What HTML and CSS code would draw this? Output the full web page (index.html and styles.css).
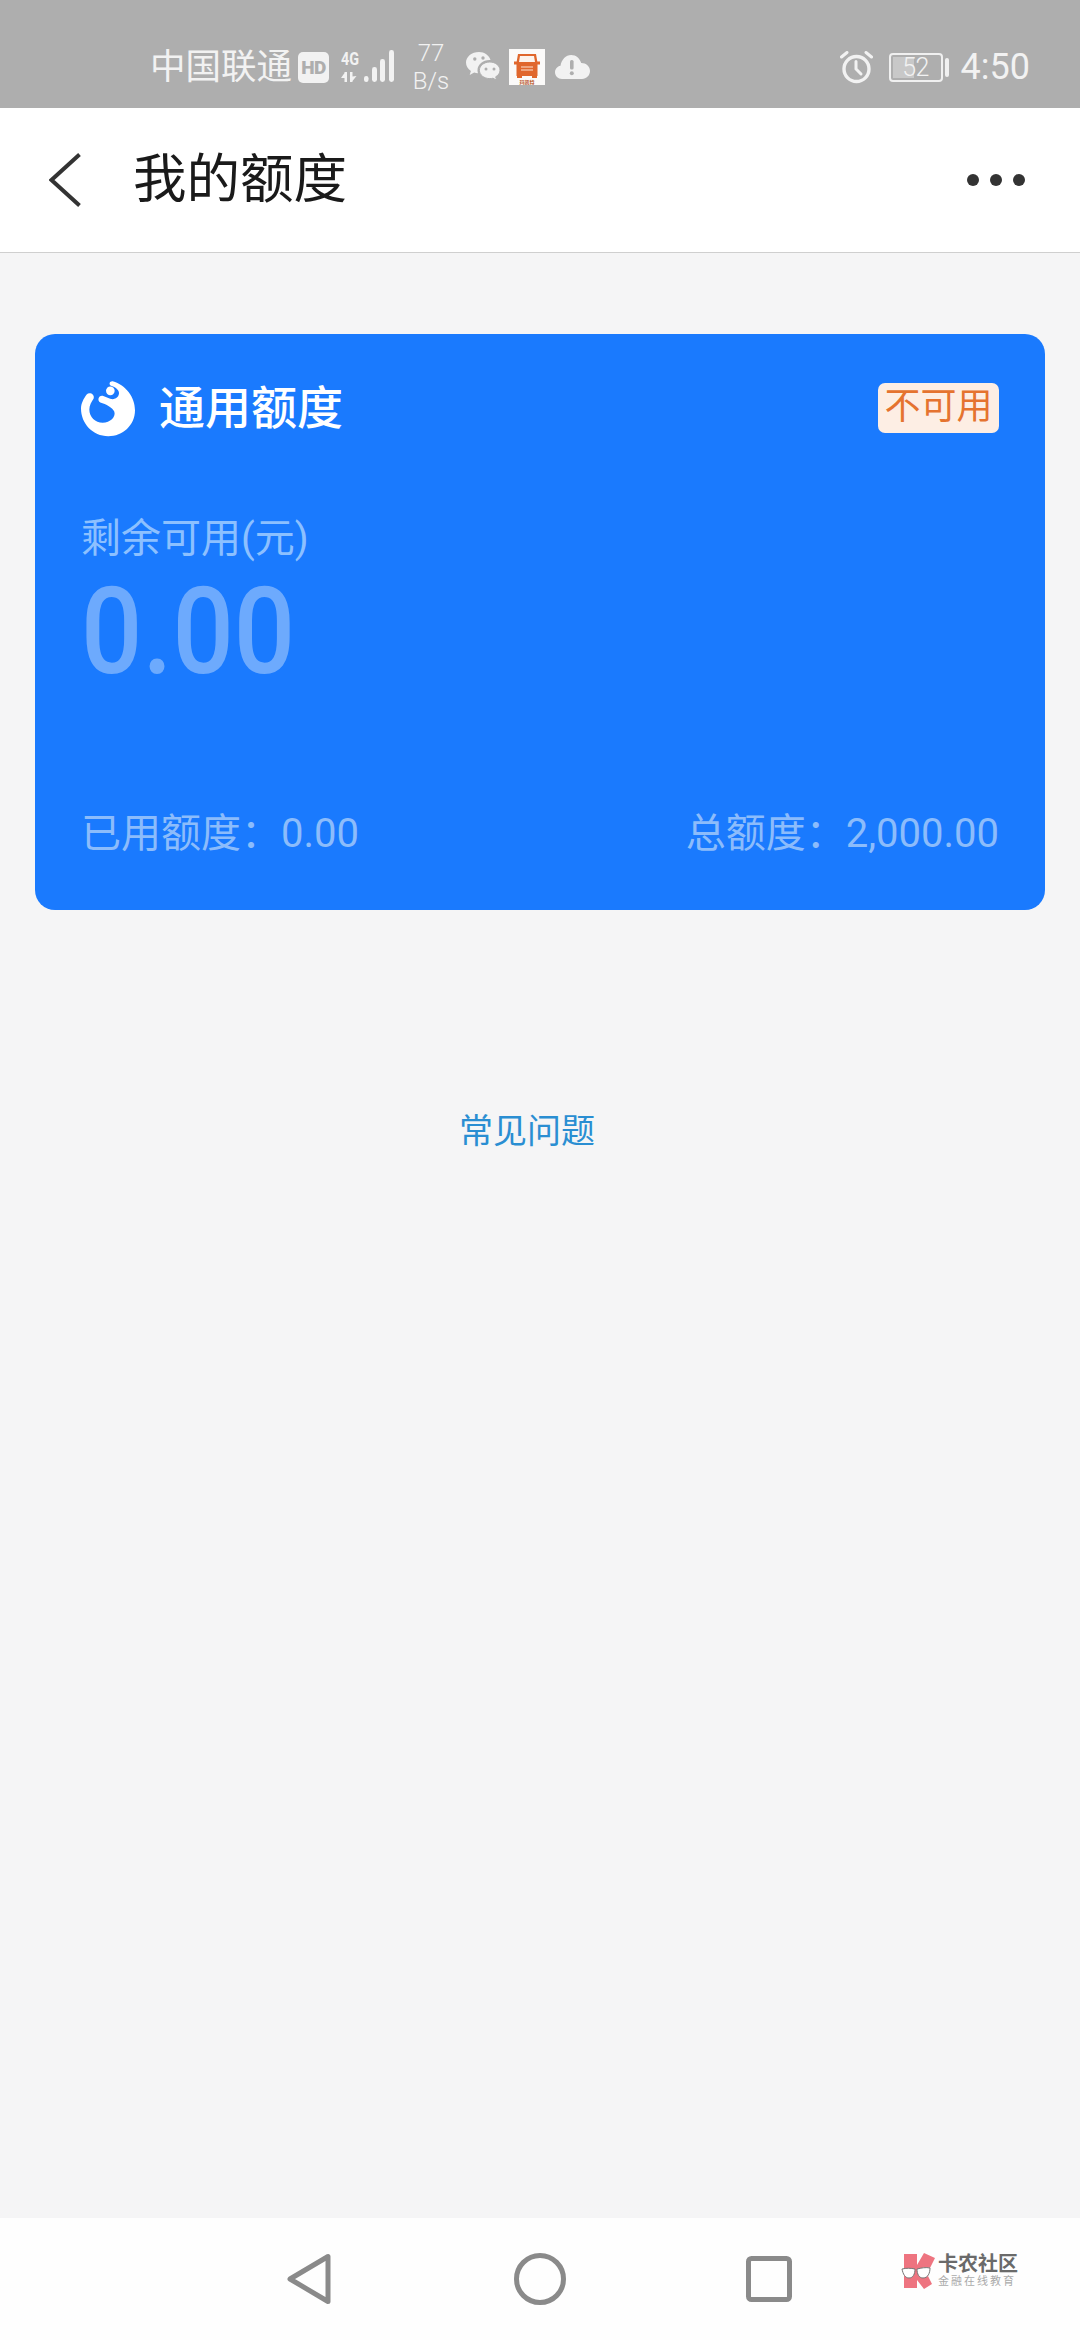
FILE: index.html
```html
<!DOCTYPE html>
<html lang="zh-CN">
<head>
<meta charset="utf-8">
<title>我的额度</title>
<link rel="stylesheet" href="styles.css">
</head>
<body>
<div class="app">
  <div class="status">
    <span class="carrier">中国联通</span>
    <span class="hd">HD</span>
    <svg class="signal" viewBox="0 0 54 34" width="54" height="34">
      <text x="0" y="15" class="net" textLength="18" lengthAdjust="spacingAndGlyphs">4G</text>
      <g fill="#f2f2f2">
        <path d="M3.500 22h2.500v10H3.500ZM3.500 23 0 28h3.500Z"/>
        <path d="M9 22h2.500v4.500l4-.5-4 5V32H9Z"/>
        <rect x="23" y="26" width="4.500" height="6" rx="2.200"/>
        <rect x="31" y="17" width="5" height="15" rx="2.400"/>
        <rect x="39" y="9" width="5" height="23" rx="2.400"/>
        <rect x="48" y="0" width="5" height="32" rx="2.400"/>
      </g>
    </svg>
    <div class="speed"><span>77</span><span>B/s</span></div>
    <svg class="wechat" viewBox="0 0 34 30" width="34" height="30">
      <path fill="#f2f2f2" d="M13 0C5.800 0 0 4.700 0 10.600c0 3.400 1.900 6.300 4.900 8.300L3.700 23l4.500-2.400c1.200.3 2.500.5 3.800.6-.3-1-.5-2-.5-3 0-5.700 5.400-10.200 12-10.200h1C23.100 3.300 18.500 0 13 0Z"/>
      <path fill="#f2f2f2" stroke="#aeaeae" stroke-width="1" d="M23.800 10C18 10 13.400 13.700 13.400 18.300c0 4.600 4.600 8.300 10.400 8.300 1.100 0 2.200-.1 3.200-.4l3.600 2-.9-3.400c2.700-1.500 4.300-3.900 4.300-6.500C34 13.700 29.500 10 23.800 10Z"/>
      <circle cx="8.800" cy="7" r="1.700" fill="#aeaeae"/><circle cx="17" cy="6" r="1.700" fill="#aeaeae"/>
      <circle cx="20" cy="17" r="1.500" fill="#aeaeae"/><circle cx="28" cy="17" r="1.500" fill="#aeaeae"/>
    </svg>
    <svg class="truck" viewBox="0 0 36 36" width="36" height="36">
      <rect width="36" height="36" fill="#fbfaf9"/>
      <path fill="#e0672d" d="M9 5h18l1.300 7.500H31v3h-2.500V27H7.500V15.500H5v-3h2.700Z"/>
      <path fill="#fdf3ec" d="M11 7h14l1 6H10Z"/>
      <path stroke="#fbe3d4" stroke-width="1.200" d="M12 18h12M12 21h12"/>
      <rect x="8" y="27" width="5" height="2" fill="#e0672d"/><rect x="23" y="27" width="5" height="2" fill="#e0672d"/>
      <text x="18" y="34.500" class="truck-label">玛凯特</text>
    </svg>
    <svg class="cloud" viewBox="0 0 35 24" width="35" height="24">
      <path fill="#f2f2f2" d="M7 24C3 24 0 21 0 17.300c0-3.300 2.400-6 5.500-6.500C6.500 4.600 10.800 0 16.200 0c4.800 0 8.800 3.500 10 8.100 4.700-.1 8.800 3.400 8.800 8 0 4.400-3.500 7.900-8 7.900Z"/>
      <rect x="15" y="5" width="3.600" height="9.500" rx="1.600" fill="#aeaeae"/><circle cx="16.800" cy="18.200" r="2" fill="#aeaeae"/>
    </svg>
    <div class="status-right">
      <svg class="alarm" viewBox="0 0 33 33" width="33" height="33" fill="none" stroke="#f2f2f2">
        <circle cx="16.500" cy="18" r="12.500" stroke-width="3.400"/>
        <path d="M16 10.500V18l5 5" stroke-width="3" stroke-linecap="round"/>
        <path d="M1.500 6 7 1.500M31.500 6 26 1.500" stroke-width="3" stroke-linecap="round"/>
      </svg>
      <div class="battery"><span class="battery-body">52</span><span class="battery-nub"></span></div>
      <span class="clock">4:50</span>
    </div>
  </div>

  <header class="topbar">
    <svg class="back" viewBox="0 0 33 54" width="33" height="54" fill="none">
      <path d="M30.500 1.500 2.500 27l28 25.500" stroke="#333" stroke-width="4"/>
    </svg>
    <h1 class="title">我的额度</h1>
    <div class="more"><i></i><i></i><i></i></div>
  </header>

  <main class="content">
    <section class="card">
      <div class="card-head">
        <svg class="brand" viewBox="30 30 165 170" width="55" height="57">
          <path fill="#fff" d="M125 33C165 45 192 80 192 120C192 165 155 198 112 198C65 198 30 160 30 115C30 100 38 85 47 73C55 65 72 72 68 85C62 95 55 105 55 118C55 140 73 158 95 158C118 158 135 140 130 125C125 112 105 102 88 97C78 92 82 75 95 77C105 80 115 87 125 87C140 87 148 72 142 62C138 54 128 50 120 47C112 42 116 32 125 33Z"/>
          <circle cx="118" cy="62" r="13" fill="#fff"/>
        </svg>
        <h2 class="card-title">通用额度</h2>
        <span class="badge">不可用</span>
      </div>
      <div class="remain-label">剩余可用(元)</div>
      <div class="remain-value">0.00</div>
      <div class="card-foot">
        <span>已用额度：0.00</span>
        <span>总额度：2,000.00</span>
      </div>
    </section>
    <a class="faq">常见问题</a>
  </main>

  <nav class="navbar">
    <svg viewBox="0 0 44 52" width="44" height="52" fill="none">
      <path d="M41 3.500V48.500L3 26Z" stroke="#8a8a8a" stroke-width="5" stroke-linejoin="round"/>
    </svg>
    <svg class="nav-circle" viewBox="0 0 52 52" width="52" height="52" fill="none">
      <circle cx="26" cy="26" r="23.500" stroke="#8a8a8a" stroke-width="5"/>
    </svg>
    <svg class="nav-square" viewBox="0 0 46 46" width="46" height="46" fill="none">
      <rect x="2.500" y="2.500" width="41" height="41" rx="3" stroke="#8a8a8a" stroke-width="5"/>
    </svg>
    <div class="mark">
      <svg viewBox="0 0 34 36" width="34" height="36">
        <path fill="#ee7480" d="M3 1H16V12L23 0L34 5L26 21L31 31L23 36L16 27V35H3Z"/>
        <path fill="#fff" stroke="#777" stroke-width="1" d="M1 16c4-1 9-1 13 0 0 5-2 9-6 9-4 0-6-4-7-9ZM16 16c4-1 9-2 13-1 0 5-2 10-7 10-4 0-6-4-6-9Z"/>
      </svg>
      <div class="mark-text">
        <span class="mark-name">卡农社区</span>
        <span class="mark-sub">金融在线教育</span>
      </div>
    </div>
  </nav>
</div>
</body>
</html>
```
FILE: styles.css
```css
* { box-sizing: border-box; }
html, body { margin: 0; padding: 0; }
body {
  width: 1080px;
  height: 2340px;
  overflow: hidden;
  font-family: Roboto, "Noto Sans CJK SC", sans-serif;
  background: #f5f5f6;
}
.app { display: flex; flex-direction: column; height: 2340px; }

/* status bar */
.status {
  height: 108px;
  flex: none;
  padding: 26px 50px 0 150px;
  display: flex;
  align-items: center;
  background: #aeaeae;
  color: #f2f2f2;
}
.carrier { font-size: 35.500px; line-height: 44px; white-space: nowrap; flex: none; }
.hd {
  width: 31px; height: 31px; margin-left: 6px; border-radius: 5px;
  background: #f2f2f2; color: #aeaeae;
  font-size: 19px; font-weight: 900; line-height: 31px; text-align: center;
  letter-spacing: -.5px;
}
.signal { margin-left: 12px; flex: none; }
.net { font: 700 19px "Roboto", sans-serif; fill: #f2f2f2; }
.speed {
  width: 36px; margin-left: 18px; display: flex; flex-direction: column; align-items: center;
  font-size: 24px; line-height: 28px; font-weight: 300; white-space: nowrap;
}
.wechat { margin-left: 17px; flex: none; }
.truck { margin-left: 9px; flex: none; }
.truck-label { font: 700 5px "Noto Sans CJK SC", sans-serif; fill: #b8562a; text-anchor: middle; }
.cloud { margin-left: 10px; flex: none; }
.status-right { margin-left: auto; display: flex; align-items: center; }
.alarm { flex: none; }
.battery { margin-left: 16px; display: flex; align-items: center; gap: 2px; }
.battery-body {
  width: 54px; height: 29px; border: 2px solid #f0f0f0; border-radius: 4px;
  background: linear-gradient(90deg, #c8c8c8 0, #c8c8c8 21px, transparent 21px) 2px center / 100% 21px no-repeat;
  font-size: 25px; line-height: 25px; text-align: center; font-weight: 300; letter-spacing: -.5px;
}
.battery-nub { width: 4px; height: 19px; border-radius: 2px; background: #f0f0f0; }
.clock { margin-left: 12px; font-size: 36px; line-height: 40px; }

/* top bar */
.topbar {
  height: 145px;
  flex: none;
  display: flex;
  align-items: center;
  padding: 0 55px 0 49px;
  background: #fff;
  border-bottom: 1px solid #cfcfcf;
}
.back { flex: none; }
.title { margin: 0 0 0 51px; font-size: 53.500px; line-height: 60px; font-weight: 400; color: #1a1a1a; }
.more { margin-left: auto; display: flex; gap: 11px; }
.more i { width: 12px; height: 12px; border-radius: 50%; background: #333; }

/* content */
.content { flex: 1; display: flex; flex-direction: column; }
.card {
  height: 576px;
  margin: 81px 35px 0;
  padding: 49px 46px 51px;
  display: flex;
  flex-direction: column;
  background: #1a7afe;
  border-radius: 20px;
}
.card-head { display: flex; align-items: center; height: 50px; }
.brand { flex: none; margin-top: 1px; }
.card-title { margin: 0 0 0 23px; font-size: 46px; line-height: 50px; font-weight: 500; color: #fff; }
.badge {
  margin-left: auto;
  width: 121px; height: 50px;
  border-radius: 7px;
  background: #fdeee4;
  color: #e5732f;
  font-size: 36px; line-height: 48px; text-align: center;
  white-space: nowrap;
}
.remain-label { margin-top: 81px; font-size: 40px; line-height: 50px; color: #8cc0ff; }
.remain-value {
  margin-top: 8px;
  font-size: 120px; line-height: 120px; font-weight: 500;
  color: #6daafd;
  transform: scaleX(.9);
  transform-origin: left center;
}
.card-foot {
  margin-top: auto;
  display: flex;
  justify-content: space-between;
  font-size: 40px; line-height: 50px;
  color: #8cbcfb;
}
.faq {
  margin-top: 196px;
  padding-right: 26px;
  text-align: center;
  font-size: 34px; line-height: 50px;
  color: #2a8ed2;
}

/* nav */
.navbar {
  position: relative;
  height: 122px;
  flex: none;
  display: flex;
  align-items: center;
  padding-left: 287px;
  background: #fefefe;
}
.nav-circle { margin-left: 183px; }
.nav-square { margin-left: 180px; }
.mark { position: absolute; left: 901px; top: 35px; display: flex; align-items: center; gap: 3px; }
.mark-text { display: flex; flex-direction: column; }
.mark-name { font-size: 20px; line-height: 22px; font-weight: 700; color: #6a6a6a; white-space: nowrap; }
.mark-sub { font-size: 11px; line-height: 14px; letter-spacing: 2px; color: #aaa; white-space: nowrap; }
```
